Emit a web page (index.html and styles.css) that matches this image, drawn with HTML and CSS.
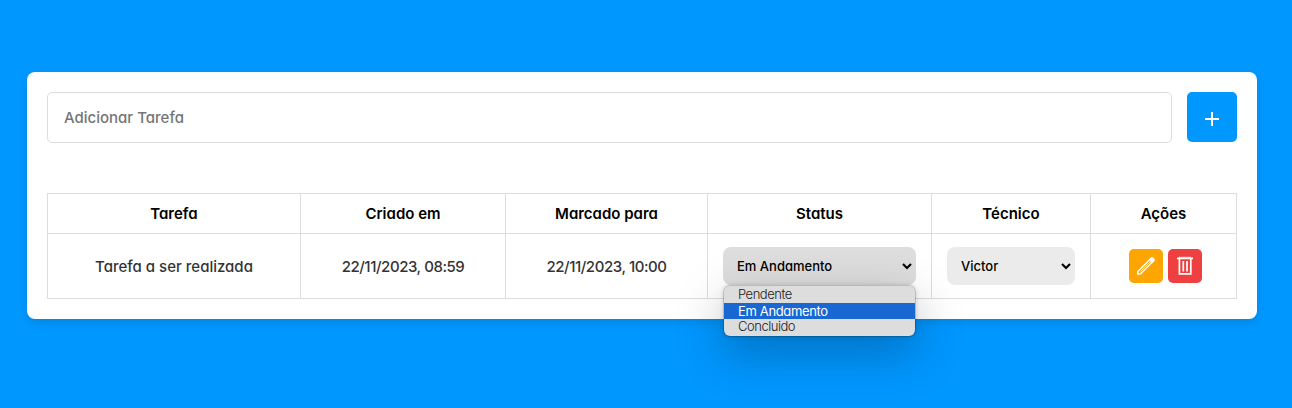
FILE: index.html
```html
<!DOCTYPE html>
<html lang="pt-BR">
<head>
<meta charset="utf-8">
<title>Tarefas</title>
<link rel="stylesheet" href="styles.css">
</head>
<body>
<main class="card">
  <form class="add-form">
    <div class="field"><span>Adicionar Tarefa</span></div>
    <button type="button" class="add-button" aria-label="Adicionar"><svg width="14" height="14" viewBox="0 0 14 14"><path d="M7 0v14M0 7h14" stroke="#fff" stroke-width="2"/></svg></button>
  </form>
  <section class="table">
    <div class="cell head"><span>Tarefa</span></div>
    <div class="cell head"><span>Criado em</span></div>
    <div class="cell head"><span>Marcado para</span></div>
    <div class="cell head"><span>Status</span></div>
    <div class="cell head"><span>Técnico</span></div>
    <div class="cell head"><span>Ações</span></div>
    <div class="cell"><span>Tarefa a ser realizada</span></div>
    <div class="cell"><span class="date">22/11/2023, 08:59</span></div>
    <div class="cell"><span class="date">22/11/2023, 10:00</span></div>
    <div class="cell">
      <div class="select status">
        <span>Em Andamento</span>
        <svg class="chevron" width="10" height="7" viewBox="0 0 10 7"><path d="M1 1l4 4 4-4" fill="none" stroke="#000" stroke-width="2.1"/></svg>
        <div class="menu">
          <div class="option"><span>Pendente</span></div>
          <div class="option selected"><span>Em Andamento</span></div>
          <div class="option"><span>Concluido</span></div>
        </div>
      </div>
    </div>
    <div class="cell">
      <div class="select tech">
        <span>Victor</span>
        <svg class="chevron" width="10" height="7" viewBox="0 0 10 7"><path d="M1 1l4 4 4-4" fill="none" stroke="#000" stroke-width="2.1"/></svg>
      </div>
    </div>
    <div class="cell actions">
      <button type="button" class="icon-button edit" aria-label="Editar"><svg width="20" height="20" viewBox="0 0 20 20" fill="none" stroke="#fff" stroke-width="1.5" stroke-linejoin="round"><path d="M1.8 18.2V15.5L15.2 2.3q1.2-.8 2.2.2 1.1 1.1.2 2.2L4.6 17.7z"/><path d="M4.4 15.6L15 5" stroke-width=".8"/><path d="M14.2 3.6l2.3 2.3 1.4-1.6-2.2-2.2z" fill="#fff"/></svg></button>
      <button type="button" class="icon-button delete" aria-label="Excluir"><svg width="18" height="20" viewBox="0 0 18 20" fill="none" stroke="#fff" stroke-width="1.7"><path d="M1 2.4h16M3.4 2.5v15.4h11.4V2.5M7.3 5v10.5M11 5v10.5"/><path d="M3 1.3h12" stroke-width=".8"/></svg></button>
    </div>
  </section>
</main>
</body>
</html>
```
FILE: styles.css
```css
* { box-sizing: border-box; }
body {
  margin: 0;
  height: 408px;
  overflow: hidden;
  padding: 72px 35px 0 27px;
  background: #0097ff;
  font: 450 15px Inter, sans-serif;
  font-feature-settings: "cv11", "calt" 0;
  color: #333;
}
button { border: 0; padding: 0; font: inherit; }
span { white-space: nowrap; }
.card {
  height: 247px;
  padding: 20px;
  background: #fff;
  border-radius: 8px;
  box-shadow: 0 4px 8px rgba(0, 0, 0, .1);
}
.add-form { display: flex; gap: 15px; margin-bottom: 50px; }
.field {
  flex: 1;
  height: 51px;
  padding: 0 16px;
  display: flex;
  align-items: center;
  border: 1px solid #ddd;
  border-radius: 5px;
  color: #757575;
}
.add-button {
  width: 50px;
  height: 50px;
  padding-top: 3px;
  display: grid;
  place-items: center;
  background: #0097ff;
  border-radius: 5px;
}
.table {
  display: grid;
  grid-template-columns: 253px 205px 202px 224px 159px 146px;
  grid-template-rows: 40px 65px;
  border: solid #ddd;
  border-width: 1px 0 0 1px;
}
.cell {
  display: flex;
  align-items: center;
  justify-content: center;
  border: solid #ddd;
  border-width: 0 1px 1px 0;
}
.head { color: #000; font-weight: 600; }
.date { letter-spacing: -.43px; }
.select {
  position: relative;
  height: 38px;
  padding: 0 4px 0 14px;
  display: flex;
  align-items: center;
  justify-content: space-between;
  border-radius: 8px;
  font-size: 13px;
  color: #000;
}
.status { width: 193px; background: #ddd; }
.tech { width: 128px; background: #ebebeb; }
.menu {
  position: absolute;
  top: 38px;
  left: 0;
  width: 193px;
  height: 52px;
  overflow: hidden;
  background: #ddd;
  background-clip: padding-box;
  border: 1px solid rgba(0, 0, 0, .15);
  border-radius: 7px;
  box-shadow: 0 16px 48px rgba(0, 0, 0, .26), 0 0 4px rgba(0, 0, 0, .14);
  font-weight: 300;
  letter-spacing: -.48px;
  color: #222;
}
.option { height: 17px; line-height: 16px; padding-left: 14px; }
.selected { height: 16px; background: #1967d2; color: #fff; font-weight: 400; letter-spacing: -.36px; }
.option:last-child { line-height: 15px; }
.actions { gap: 5px; padding-left: 3px; }
.icon-button { width: 34px; height: 34px; display: grid; place-items: center; border-radius: 5px; }
.edit { background: #ffa500; }
.delete { background: #ee4040; }
```
